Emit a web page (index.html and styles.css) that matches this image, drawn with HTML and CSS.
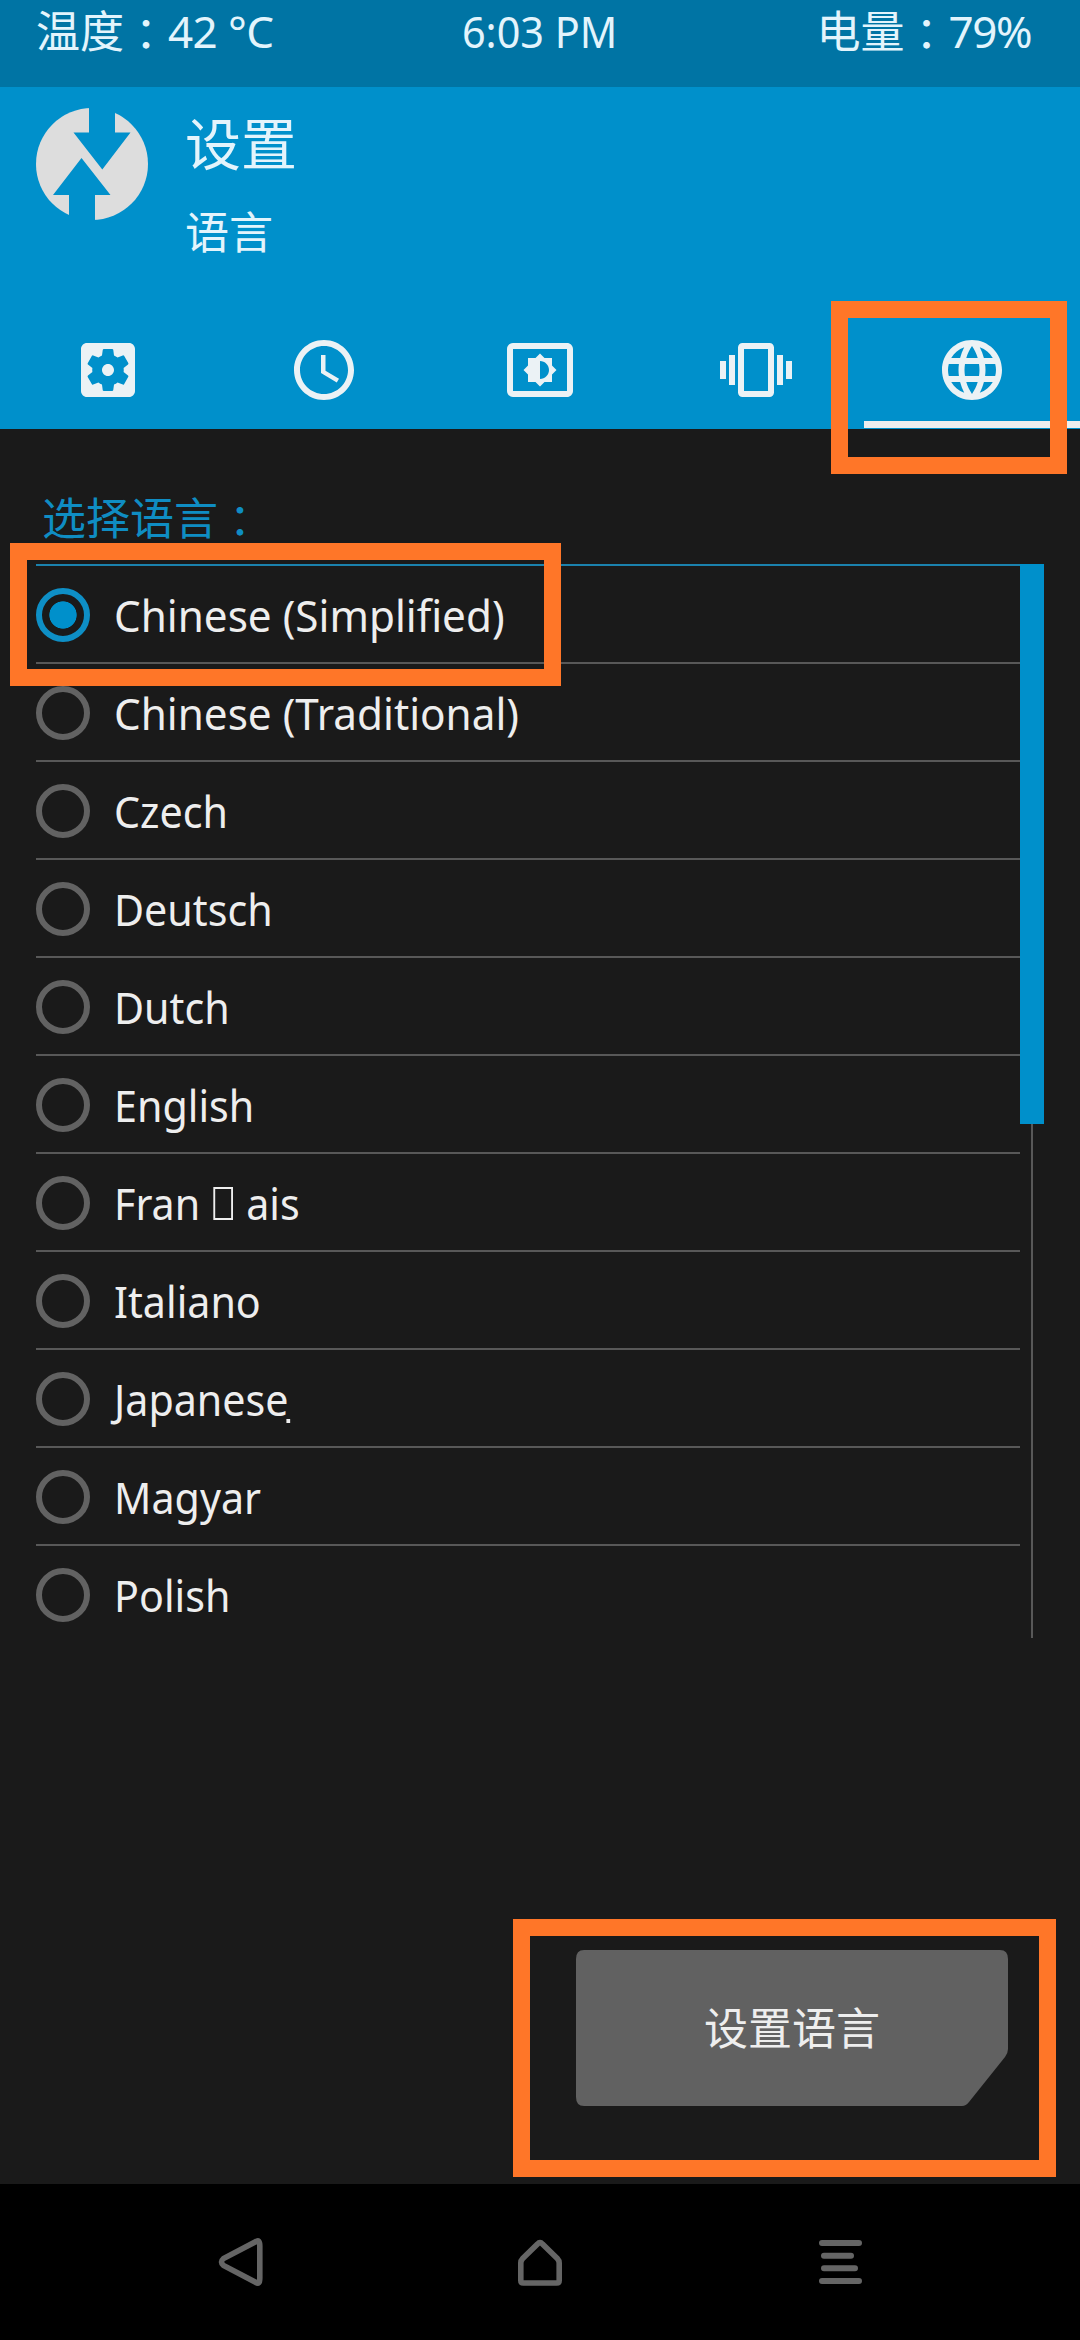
FILE: index.html
```html
<!DOCTYPE html>
<html lang="zh-CN">
<head>
<meta charset="utf-8">
<title>设置 - 语言</title>
<link rel="stylesheet" href="styles.css">
</head>
<body>
<div class="screen">
  <div class="status">
    <span class="status-left">温度<span class="colon" lang="ja">：</span><span class="temp">42 °C</span></span>
    <span class="status-mid">6:03 PM</span>
    <span class="status-right">电量<span class="colon" lang="ja">：</span><span class="battery">79%</span></span>
  </div>
  <header class="header">
    <div class="brand">
      <svg class="logo" viewBox="0 0 112 112">
        <circle class="logo-disc" cx="56" cy="56" r="56"/>
        <path class="logo-cut" d="M53-1H79V24.5H94.5L66.3 61.5L37.5 24.5H53ZM45.5 50L74.5 87H59V113H33V87H17Z"/>
      </svg>
      <div class="titles">
        <h1 class="title">设置</h1>
        <div class="subtitle">语言</div>
      </div>
    </div>
    <nav class="tabs">
      <div class="tab"><svg class="tab-icon" viewBox="0 0 24 24"><path d="M12 10c-1.1 0-2 .9-2 2s.9 2 2 2 2-.9 2-2-.9-2-2-2zm7-7H5c-1.11 0-2 .9-2 2v14c0 1.1.89 2 2 2h14c1.11 0 2-.9 2-2V5c0-1.1-.89-2-2-2zm-1.75 9c0 .23-.02.46-.05.68l1.48 1.16c.13.11.17.3.08.45l-1.4 2.42c-.09.15-.27.21-.43.15l-1.74-.7c-.36.28-.76.51-1.18.69l-.26 1.85c-.03.17-.18.3-.35.3h-2.8c-.17 0-.32-.13-.35-.29l-.26-1.85c-.43-.18-.82-.41-1.18-.69l-1.74.7c-.16.06-.34 0-.43-.15l-1.4-2.42c-.09-.15-.05-.34.08-.45l1.48-1.16c-.03-.23-.05-.46-.05-.69s.02-.46.05-.68l-1.48-1.16c-.13-.11-.17-.3-.08-.45l1.4-2.42c.09-.15.27-.21.43-.15l1.74.7c.36-.28.76-.51 1.18-.69l.26-1.85c.03-.17.18-.3.35-.3h2.8c.17 0 .32.13.35.29l.26 1.85c.43.18.82.41 1.18.69l1.74-.7c.16-.06.34 0 .43.15l1.4 2.42c.09.15.05.34-.08.45l-1.48 1.16c.03.23.05.46.05.69z"/></svg></div>
      <div class="tab"><svg class="tab-icon" viewBox="0 0 24 24"><path d="M11.99 2C6.47 2 2 6.48 2 12s4.47 10 9.99 10C17.52 22 22 17.52 22 12S17.52 2 11.99 2zM12 20c-4.42 0-8-3.58-8-8s3.58-8 8-8 8 3.58 8 8-3.58 8-8 8zm.5-13H11v6l5.25 3.15.75-1.23-4.5-2.67z"/></svg></div>
      <div class="tab"><svg class="tab-icon" viewBox="0 0 24 24"><path d="M21 3H3c-1.1 0-2 .9-2 2v14c0 1.1.9 2 2 2h18c1.1 0 2-.9 2-2V5c0-1.1-.9-2-2-2zm0 16.01H3V4.99h18v14.02zM8 16h2.5l1.5 1.5 1.5-1.5H16v-2.5l1.5-1.5-1.5-1.5V8h-2.5L12 6.5 10.5 8H8v2.5L6.5 12 8 13.5V16zm4-7c1.66 0 3 1.34 3 3s-1.34 3-3 3V9z"/></svg></div>
      <div class="tab"><svg class="tab-icon" viewBox="0 0 24 24"><path d="M0 15h2V9H0v6zm3 2h2V7H3v10zm19-8v6h2V9h-2zm-3 8h2V7h-2v10zM16.5 3h-9C6.67 3 6 3.67 6 4.5v15c0 .83.67 1.5 1.5 1.5h9c.83 0 1.5-.67 1.5-1.5v-15c0-.83-.67-1.5-1.5-1.5zM16 19H8V5h8v14z"/></svg></div>
      <div class="tab tab-active"><svg class="tab-icon" viewBox="0 0 24 24"><path d="M11.99 2C6.47 2 2 6.48 2 12s4.47 10 9.99 10C17.52 22 22 17.52 22 12S17.52 2 11.99 2zm6.93 6h-2.95c-.32-1.25-.78-2.45-1.38-3.56 1.84.63 3.37 1.91 4.33 3.56zM12 4.04c.83 1.2 1.48 2.53 1.91 3.96h-3.82c.43-1.43 1.08-2.76 1.91-3.96zM4.26 14C4.1 13.36 4 12.69 4 12s.1-1.36.26-2h3.38c-.08.66-.14 1.32-.14 2 0 .68.06 1.34.14 2H4.26zm.82 2h2.95c.32 1.25.78 2.45 1.38 3.56-1.84-.63-3.37-1.9-4.33-3.56zm2.95-8H5.08c.96-1.66 2.49-2.93 4.33-3.56C8.81 5.55 8.35 6.75 8.03 8zM12 19.96c-.83-1.2-1.48-2.53-1.91-3.96h3.82c-.43 1.43-1.08 2.76-1.91 3.96zM14.34 14H9.66c-.09-.66-.16-1.32-.16-2 0-.68.07-1.35.16-2h4.68c.09.65.16 1.32.16 2 0 .68-.07 1.34-.16 2zm.25 5.56c.6-1.11 1.06-2.31 1.38-3.56h2.95c-.96 1.65-2.49 2.93-4.33 3.56zM16.36 14c.08-.66.14-1.32.14-2 0-.68-.06-1.34-.14-2h3.38c.16.64.26 1.31.26 2s-.1 1.36-.26 2h-3.38z"/></svg></div>
    </nav>
  </header>

  <main class="content">
    <div class="label">选择语言<span class="colon" lang="ja">：</span></div>
    <div class="list">
      <ul class="items">
        <li class="item"><span class="radio radio-on"></span><span class="name name-long">Chinese (Simplified)</span></li>
        <li class="item"><span class="radio"></span><span class="name name-long">Chinese (Traditional)</span></li>
        <li class="item"><span class="radio"></span><span class="name">Czech</span></li>
        <li class="item"><span class="radio"></span><span class="name">Deutsch</span></li>
        <li class="item"><span class="radio"></span><span class="name">Dutch</span></li>
        <li class="item"><span class="radio"></span><span class="name">English</span></li>
        <li class="item"><span class="radio"></span><span class="name">Fran<span class="missing"></span>ais</span></li>
        <li class="item"><span class="radio"></span><span class="name">Italiano</span></li>
        <li class="item"><span class="radio"></span><span class="name marked">Japanese</span></li>
        <li class="item"><span class="radio"></span><span class="name">Magyar</span></li>
        <li class="item"><span class="radio"></span><span class="name">Polish</span></li>
      </ul>
      <div class="scroll"><div class="thumb"></div></div>
    </div>
    <button class="set">
      <svg class="set-shape" viewBox="0 0 432 156"><path d="M8 0H424Q432 0 432 9V99Q432 103 429 107L393 152Q390 156 386 156H8Q0 156 0 147V9Q0 0 8 0Z"/></svg>
      <span class="set-text">设置语言</span>
    </button>
  </main>

  <footer class="nav">
    <svg class="nav-icon" viewBox="0 0 60 60"><path d="M45.5 10.8Q49.8 7.5 49.8 15V47Q49.8 54.5 45.5 51.2L13.5 34.5Q9.5 31 13.5 27.5Z"/></svg>
    <svg class="nav-icon" viewBox="0 0 60 60"><path d="M27.5 13Q30 10.2 32.5 13L47.3 27.5Q49.2 29.5 49.2 32V49.5Q49.2 52 46.7 52H13.3Q10.8 52 10.8 49.5V32Q10.8 29.5 12.7 27.5Z"/></svg>
    <svg class="nav-icon nav-menu" viewBox="0 0 60 60"><path d="M12 12H49M14 24.7H41M14 37.3H45M12 50H49"/></svg>
  </footer>

  <div class="mark mark-tab"></div>
  <div class="mark mark-item"></div>
  <div class="mark mark-set"></div>
</div>
</body>
</html>
```

FILE: styles.css
```css
* { box-sizing: border-box; }

body {
  margin: 0;
  background: #1a1a1a;
}

.screen {
  position: relative;
  width: 1080px;
  height: 2340px;
  display: flex;
  flex-direction: column;
  overflow: hidden;
  background: #1a1a1a;
  color: #eeeeee;
  font: 44px/62px "Noto Sans", "Noto Sans CJK SC", sans-serif;
  white-space: nowrap;
}

.colon {
  font-family: "Noto Sans CJK JP", sans-serif;
  line-height: 0;
  vertical-align: -3px;
}

.status {
  display: grid;
  grid-template-columns: 1fr auto 1fr;
  height: 87px;
  padding: 0 48px 0 36px;
  background: #0074a4;
  color: #e3f4fc;
}

.temp { letter-spacing: -0.6px; }
.status-mid { margin-left: 12px; transform: scaleX(0.94); }
.status-right { text-align: right; }
.battery { padding-right: 1px; letter-spacing: -1.5px; }

.header {
  display: flex;
  flex-direction: column;
  justify-content: space-between;
  height: 342px;
  background: #0090cb;
  color: #e3f4fc;
}

.brand {
  display: flex;
  gap: 37px;
  padding: 16px 36px 0;
}

.logo {
  width: 112px;
  height: 112px;
  margin-top: 5px;
}

.logo-disc { fill: #dddddd; }
.logo-cut { fill: #0090cb; }

.titles { font-family: "Noto Sans CJK SC", sans-serif; }

.title {
  margin: 0;
  font-size: 56px;
  font-weight: 400;
  line-height: 76px;
}

.subtitle { line-height: 60px; padding-top: 21px; }

.tabs { display: grid; grid-template-columns: repeat(5, 1fr); }

.tab {
  display: flex;
  justify-content: center;
  height: 95px;
  border-bottom: 1px solid #0090cb;
}

.tab-active { box-shadow: inset 0 -7px #eeeeee; }
.tab-icon { width: 72px; height: 72px; fill: #ebf2f5; }

.content {
  display: flex;
  flex-direction: column;
  flex: 1;
  padding: 56px 36px 0;
}

.label {
  height: 79px;
  padding-left: 6px;
  color: #0f8dc3;
  font-family: "Noto Sans CJK SC", sans-serif;
}

.list { display: flex; height: 1074px; }

.items {
  flex: 1;
  margin: 0;
  padding: 0;
  list-style: none;
}

.item {
  display: flex;
  align-items: center;
  gap: 24px;
  height: 98px;
  padding-top: 2px;
  border-top: 2px solid #585858;
}

.item:first-child { border-top-color: #1b82ae; }

.radio {
  width: 54px;
  height: 54px;
  border: 6px solid #626262;
  border-radius: 50%;
}

.radio-on {
  border-color: #0e8fc6;
  background: radial-gradient(circle, #0090cb 13.3px, transparent 14px);
}

.name {
  transform: scaleX(0.937);
  transform-origin: left;
}

.name-long { transform: scaleX(0.96); }

.missing {
  display: inline-block;
  width: 21px;
  height: 33px;
  margin: 0 14px;
  border: 2px solid #eeeeee;
}

.marked::after {
  content: "";
  display: inline-block;
  width: 4px;
  height: 4px;
  margin-left: -2px;
  background: #eeeeee;
  vertical-align: -7px;
}

.scroll {
  width: 24px;
  background: linear-gradient(#585858, #585858) 11px 0 / 2px 100% no-repeat;
}

.thumb { height: 560px; background: #0090cb; }

.set {
  display: grid;
  width: 432px;
  height: 156px;
  margin: 312px 36px 0 auto;
  padding: 0;
  border: 0;
  background: none;
  color: #eeeeee;
  font: inherit;
  place-items: center;
}

.set-shape {
  grid-area: 1 / 1;
  width: 432px;
  height: 156px;
  fill: #616161;
}

.set-text { grid-area: 1 / 1; }

.nav {
  display: flex;
  justify-content: space-between;
  height: 156px;
  padding: 47px 210px 0;
  background: #000000;
}

.nav-icon {
  width: 60px;
  height: 60px;
  fill: none;
  stroke: #656565;
  stroke-width: 5.6px;
  stroke-linecap: round;
}

.nav-menu { stroke-width: 6px; }

.mark {
  position: absolute;
  border: 17px solid #ff7628;
}

.mark-tab { left: 831px; top: 301px; width: 236px; height: 173px; }
.mark-item { left: 10px; top: 543px; width: 551px; height: 143px; }
.mark-set { left: 513px; top: 1919px; width: 543px; height: 258px; }
```
